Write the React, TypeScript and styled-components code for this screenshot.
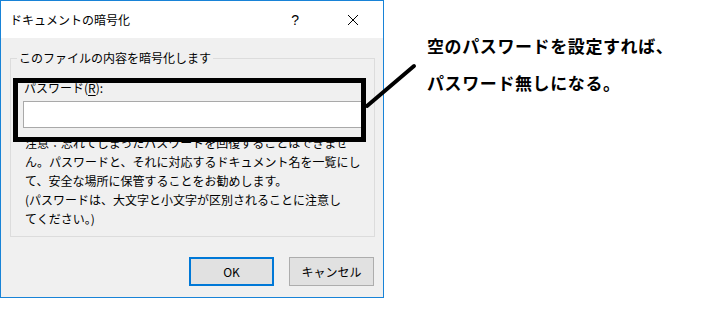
import styled, { createGlobalStyle } from 'styled-components'

const GlobalStyle = createGlobalStyle`
  html, body {
    margin: 0;
    padding: 0;
    background: #ffffff;
  }
  body {
    font-family: 'Noto Sans CJK JP', 'Noto Sans', sans-serif;
    color: #000;
  }
`

const noteLines = [
  '注意：忘れてしまったパスワードを回復することはできませ',
  'ん。パスワードと、それに対応するドキュメント名を一覧にし',
  'て、安全な場所に保管することをお勧めします。',
  '(パスワードは、大文字と小文字が区別されることに注意し',
  'てください。)',
]

const App = () => {
  return (
    <Page>
      <GlobalStyle />
      <Dialog>
        <TitleBar>
          <Title>ドキュメントの暗号化</Title>
          <TitleButtons>
            <HelpMark>?</HelpMark>
            <CloseIcon width='12' height='12' viewBox='0 0 12 12'>
              <path d='M1 1 L11 11 M11 1 L1 11' stroke='#000' strokeWidth='1' fill='none' />
            </CloseIcon>
          </TitleButtons>
        </TitleBar>

        <Body>
          <Group>
            <Legend>このファイルの内容を暗号化します</Legend>
            <GroupContent>
              <FieldLabel htmlFor='pw'>
                パスワード(<u>R</u>):
              </FieldLabel>
              <PasswordInput id='pw' type='password' />
              <Note>
                {noteLines.map((line) => (
                  <NoteLine key={line}>{line}</NoteLine>
                ))}
              </Note>
            </GroupContent>
          </Group>

          <ButtonRow>
            <DialogButton $primary>OK</DialogButton>
            <DialogButton>キャンセル</DialogButton>
          </ButtonRow>
        </Body>
      </Dialog>

      <Callout>
        <CalloutLine>空のパスワードを設定すれば、</CalloutLine>
        <CalloutLine>パスワード無しになる。</CalloutLine>
      </Callout>

      {/* annotation drawn over the dialog */}
      <HighlightBox />
      <Pointer width='60' height='50' viewBox='0 0 60 50'>
        <path d='M3 45 L50 5' stroke='#000' strokeWidth='4' strokeLinecap='round' />
      </Pointer>
    </Page>
  )
}

const Page = styled.div`
  position: relative;
  display: flex;
  width: 702px;
  height: 313px;
  background: #fff;
`

const Dialog = styled.div`
  box-sizing: border-box;
  width: 384px;
  height: 298px;
  border: 1px solid #1883d7;
  display: flex;
  flex-direction: column;
  font-size: 12px;
`

const TitleBar = styled.div`
  height: 37px;
  flex: none;
  background: #fff;
  display: flex;
  align-items: center;
  justify-content: space-between;
  padding-left: 9px;
`

const Title = styled.span`
  font-size: 12px;
  line-height: 16px;
`

const TitleButtons = styled.div`
  display: flex;
  align-items: center;
  gap: 48px;
  padding-right: 24px;
`

const HelpMark = styled.span`
  font-family: 'Liberation Sans', sans-serif;
  font-size: 14px;
  line-height: 16px;
`

const CloseIcon = styled.svg`
  display: block;
`

const Body = styled.div`
  flex: 1;
  background: #f0f0f0;
  display: flex;
  flex-direction: column;
  padding: 12px 8px 0 9px;
`

const Group = styled.fieldset`
  box-sizing: border-box;
  margin: 0;
  width: 365px;
  height: 187px;
  border: 1px solid #dcdcdc;
  padding: 0 0 0 6px;
`

const Legend = styled.legend`
  padding: 0 2px;
  font-size: 12px;
  line-height: 16px;
`

const GroupContent = styled.div`
  display: flex;
  flex-direction: column;
  padding: 14px 0 0 6px;
`

const FieldLabel = styled.label`
  font-size: 12px;
  line-height: 16px;
  padding-left: 1px;

  u {
    text-decoration-thickness: 1px;
    text-underline-offset: 2px;
  }
`

const PasswordInput = styled.input`
  box-sizing: border-box;
  width: 339px;
  height: 27px;
  margin-top: 5px;
  border: 1px solid #a9a9a9;
  background: #fff;
  outline: none;
  padding: 0 4px;
`

const Note = styled.div`
  margin-top: 5px;
  padding-left: 2px;
`

const NoteLine = styled.div`
  font-size: 12px;
  line-height: 19px;
  white-space: nowrap;
`

const ButtonRow = styled.div`
  display: flex;
  justify-content: flex-end;
  gap: 15px;
  margin-top: 20px;
  padding-right: 1px;
`

const DialogButton = styled.button<{ $primary?: boolean }>`
  box-sizing: border-box;
  width: 85px;
  height: 29px;
  margin: 0;
  padding: 0;
  background: #e1e1e1;
  border: ${(p) => (p.$primary ? '2px solid #0078d7' : '1px solid #adadad')};
  font-family: 'Noto Sans CJK JP', 'Noto Sans', sans-serif;
  font-size: 12px;
  color: #000;
`

const Callout = styled.div`
  padding: 27px 0 0 43px;
`

const CalloutLine = styled.div`
  font-size: 17px;
  font-weight: bold;
  line-height: 37px;
  letter-spacing: 0.6px;
  white-space: nowrap;
`

const HighlightBox = styled.div`
  position: absolute;
  left: 13px;
  top: 78px;
  width: 353px;
  height: 64px;
  box-sizing: border-box;
  border: 5px solid #000;
`

const Pointer = styled.svg`
  position: absolute;
  left: 364px;
  top: 61px;
`

export default App
